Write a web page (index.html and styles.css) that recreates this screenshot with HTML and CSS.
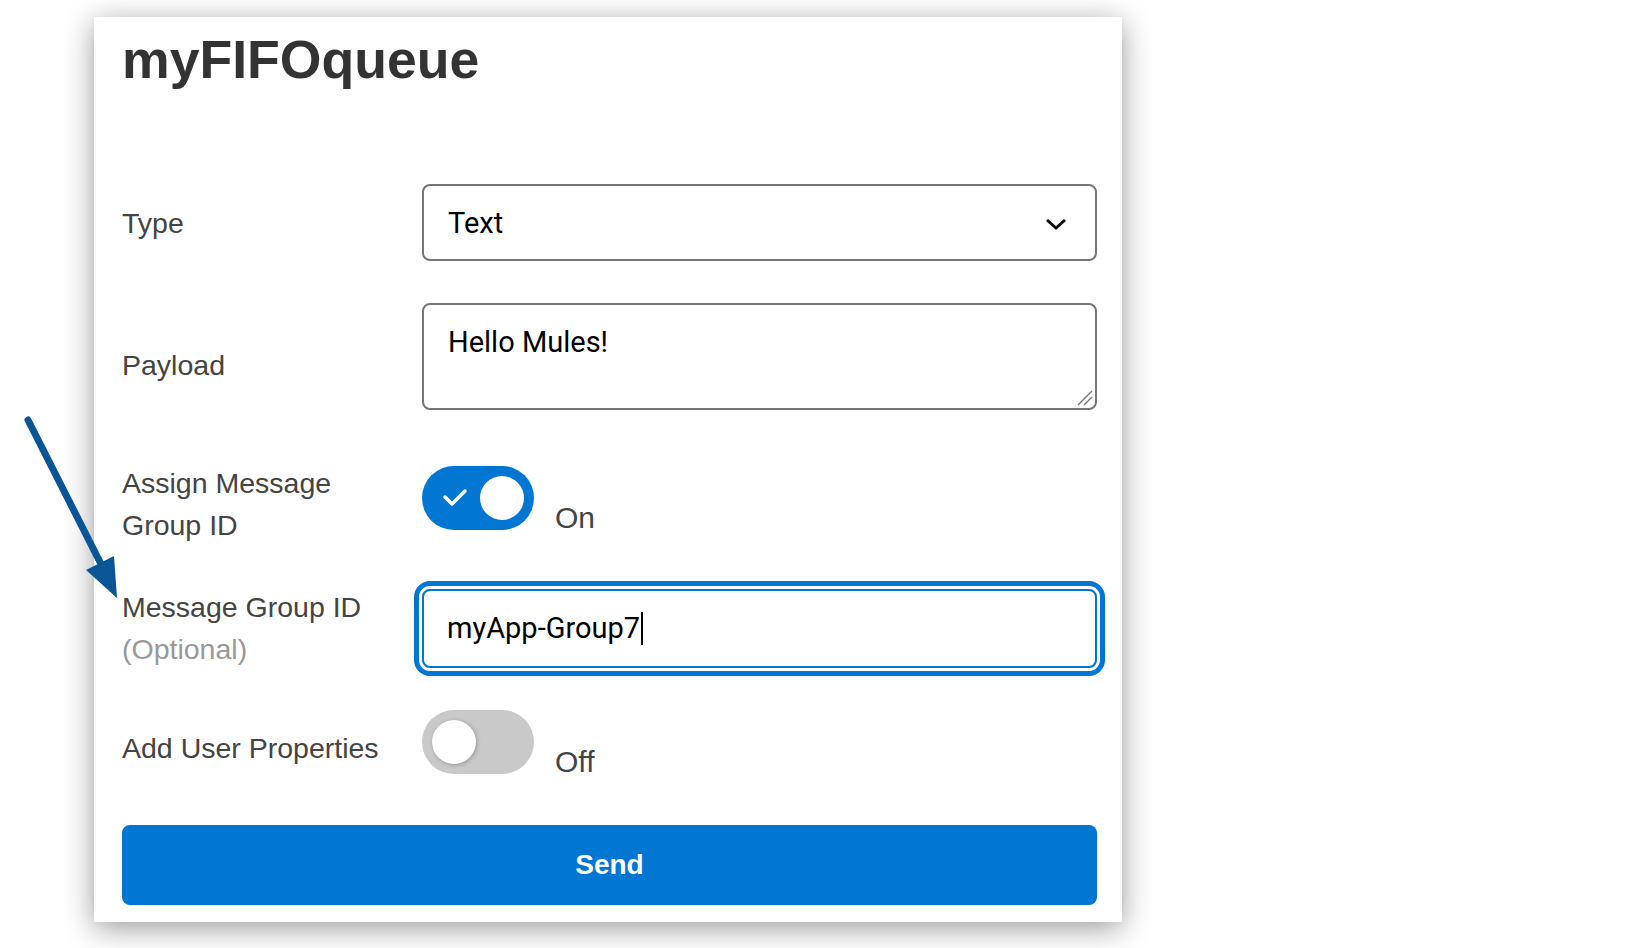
FILE: index.html
```html
<!DOCTYPE html>
<html lang="en">
<head>
    <meta charset="UTF-8">
    <meta name="viewport" content="width=device-width, initial-scale=1.0">
    <title>myFIFOqueue</title>
    <link rel="stylesheet" href="styles.css">
</head>
<body>
    <!-- Pointer arrow drawn over the card -->
    <svg class="pointer" width="140" height="620" viewBox="0 0 140 620">
        <line x1="28" y1="420" x2="102" y2="566" stroke="#0a5596" stroke-width="7" stroke-linecap="round"/>
        <polygon points="86,570 114,556 117,598" fill="#0a5596"/>
    </svg>

    <div class="card">
        <h1 class="title">myFIFOqueue</h1>

        <form class="form">
            <div class="row">
                <label class="label">Type</label>
                <div class="select-wrap">
                    <select class="select">
                        <option>Text</option>
                    </select>
                    <svg class="chevron" width="22" height="14" viewBox="0 0 22 14">
                        <polyline points="2,3 11,11 20,3" fill="none" stroke="#111" stroke-width="3"/>
                    </svg>
                </div>
            </div>

            <div class="row row-payload">
                <label class="label label-payload">Payload</label>
                <div class="textarea-wrap">
                    <textarea class="textarea">Hello Mules!</textarea>
                    <!-- resize grip -->
                    <svg class="grip" width="16" height="16" viewBox="0 0 16 16">
                        <line x1="15" y1="1" x2="1" y2="15" stroke="#777" stroke-width="1.5"/>
                        <line x1="15" y1="7" x2="7" y2="15" stroke="#777" stroke-width="1.5"/>
                    </svg>
                </div>
            </div>

            <div class="row row-gap-lg">
                <label class="label">Assign Message Group ID</label>
                <div class="toggle-line"><span class="switch on"><svg class="check" width="26" height="20" viewBox="0 0 26 20"><polyline points="3,10 10,17 23,4" fill="none" stroke="#fff" stroke-width="3.5" stroke-linecap="round" stroke-linejoin="round"/></svg><span class="knob"></span></span><span class="state">On</span></div>
            </div>

            <div class="row row-gap">
                <label class="label">Message Group ID <span class="optional">(Optional)</span></label>
                <div class="field focus"><span>myApp-Group7</span><span class="caret"></span></div>
            </div>

            <div class="row row-gap">
                <label class="label">Add User Properties</label>
                <div class="toggle-line"><span class="switch off"><span class="knob"></span></span><span class="state">Off</span></div>
            </div>

            <button type="button" class="send">Send</button>
        </form>
    </div>
</body>
</html>
```

FILE: styles.css
```css
html {
    height: 100%;
}
body {
    margin: 0;
    min-height: 100%;
    box-sizing: border-box;
    padding: 17px 0 0 94px;
    background: #fff;
    font-family: "Liberation Sans", Arial, sans-serif;
}
.pointer {
    position: absolute;
    left: 0;
    top: 0;
    z-index: 2;
}
.card {
    width: 1028px;
    box-sizing: border-box;
    padding: 10px 25px 17px 28px;
    background: #fff;
    box-shadow: 0 6px 28px rgba(0, 0, 0, 0.4);
}
.title {
    margin: 0 0 92px;
    font-size: 53.6px;
    line-height: 65px;
    font-weight: 700;
    color: #333;
}
.form {
    display: flex;
    flex-direction: column;
}
.row {
    display: grid;
    grid-template-columns: 300px 1fr;
    align-items: center;
}
.row-payload {
    margin-top: 42px;
}
.row-gap-lg {
    margin-top: 52px;
}
.row-gap {
    margin-top: 40px;
}
.label {
    max-width: 272px;
    font-size: 28.5px;
    line-height: 42px;
    color: #444;
}
.label-payload {
    margin-top: 16px;
}
.optional {
    color: #999;
}
.select-wrap,
.textarea-wrap {
    position: relative;
}
.select {
    display: block;
    width: 100%;
    height: 77px;
    box-sizing: border-box;
    padding: 0 60px 0 24px;
    border: 2px solid #767676;
    border-radius: 8px;
    background: #fff;
    font-family: Roboto, "Liberation Sans", sans-serif;
    font-size: 29px;
    color: #000;
    -webkit-appearance: none;
    appearance: none;
}
.chevron {
    position: absolute;
    right: 30px;
    top: 33px;
}
.textarea {
    display: block;
    width: 100%;
    height: 107px;
    box-sizing: border-box;
    padding: 16px 24px;
    border: 2px solid #767676;
    border-radius: 8px;
    font-family: Roboto, "Liberation Sans", sans-serif;
    font-size: 29px;
    line-height: 1.5;
    color: #000;
    resize: none;
}
.grip {
    position: absolute;
    right: 4px;
    bottom: 4px;
}
.toggle-line {
    font-size: 28px;
    line-height: 42px;
    color: #444;
}
.switch {
    display: inline-block;
    position: relative;
    width: 112px;
    height: 64px;
    border-radius: 32px;
    vertical-align: baseline;
}
.switch.on {
    background: #0176d3;
}
.switch.off {
    background: #c9c9c9;
}
.knob {
    position: absolute;
    top: 10px;
    width: 44px;
    height: 44px;
    border-radius: 50%;
    background: #fff;
}
.switch.on .knob {
    right: 10px;
}
.switch.off .knob {
    left: 10px;
    box-shadow: 1px 1px 4px rgba(0, 0, 0, 0.25);
}
.check {
    position: absolute;
    left: 20px;
    top: 21px;
}
.state {
    margin-left: 21px;
    font-size: 30px;
    vertical-align: 2px;
}
.field {
    display: flex;
    align-items: center;
    height: 79px;
    box-sizing: border-box;
    padding: 0 23px;
    border: 2px solid #0176d3;
    border-radius: 8px;
    box-shadow: 0 0 0 3px #fff, 0 0 0 8px #0176d3;
    font-family: Roboto, "Liberation Sans", sans-serif;
    font-size: 29px;
    color: #000;
}
.caret {
    width: 2px;
    height: 33px;
    margin-left: 1px;
    background: #000;
}
.send {
    margin-top: 39px;
    height: 80px;
    border: none;
    border-radius: 8px;
    background: #0176d3;
    color: #fff;
    font-family: "Liberation Sans", Arial, sans-serif;
    font-size: 28px;
    font-weight: 700;
}
```
